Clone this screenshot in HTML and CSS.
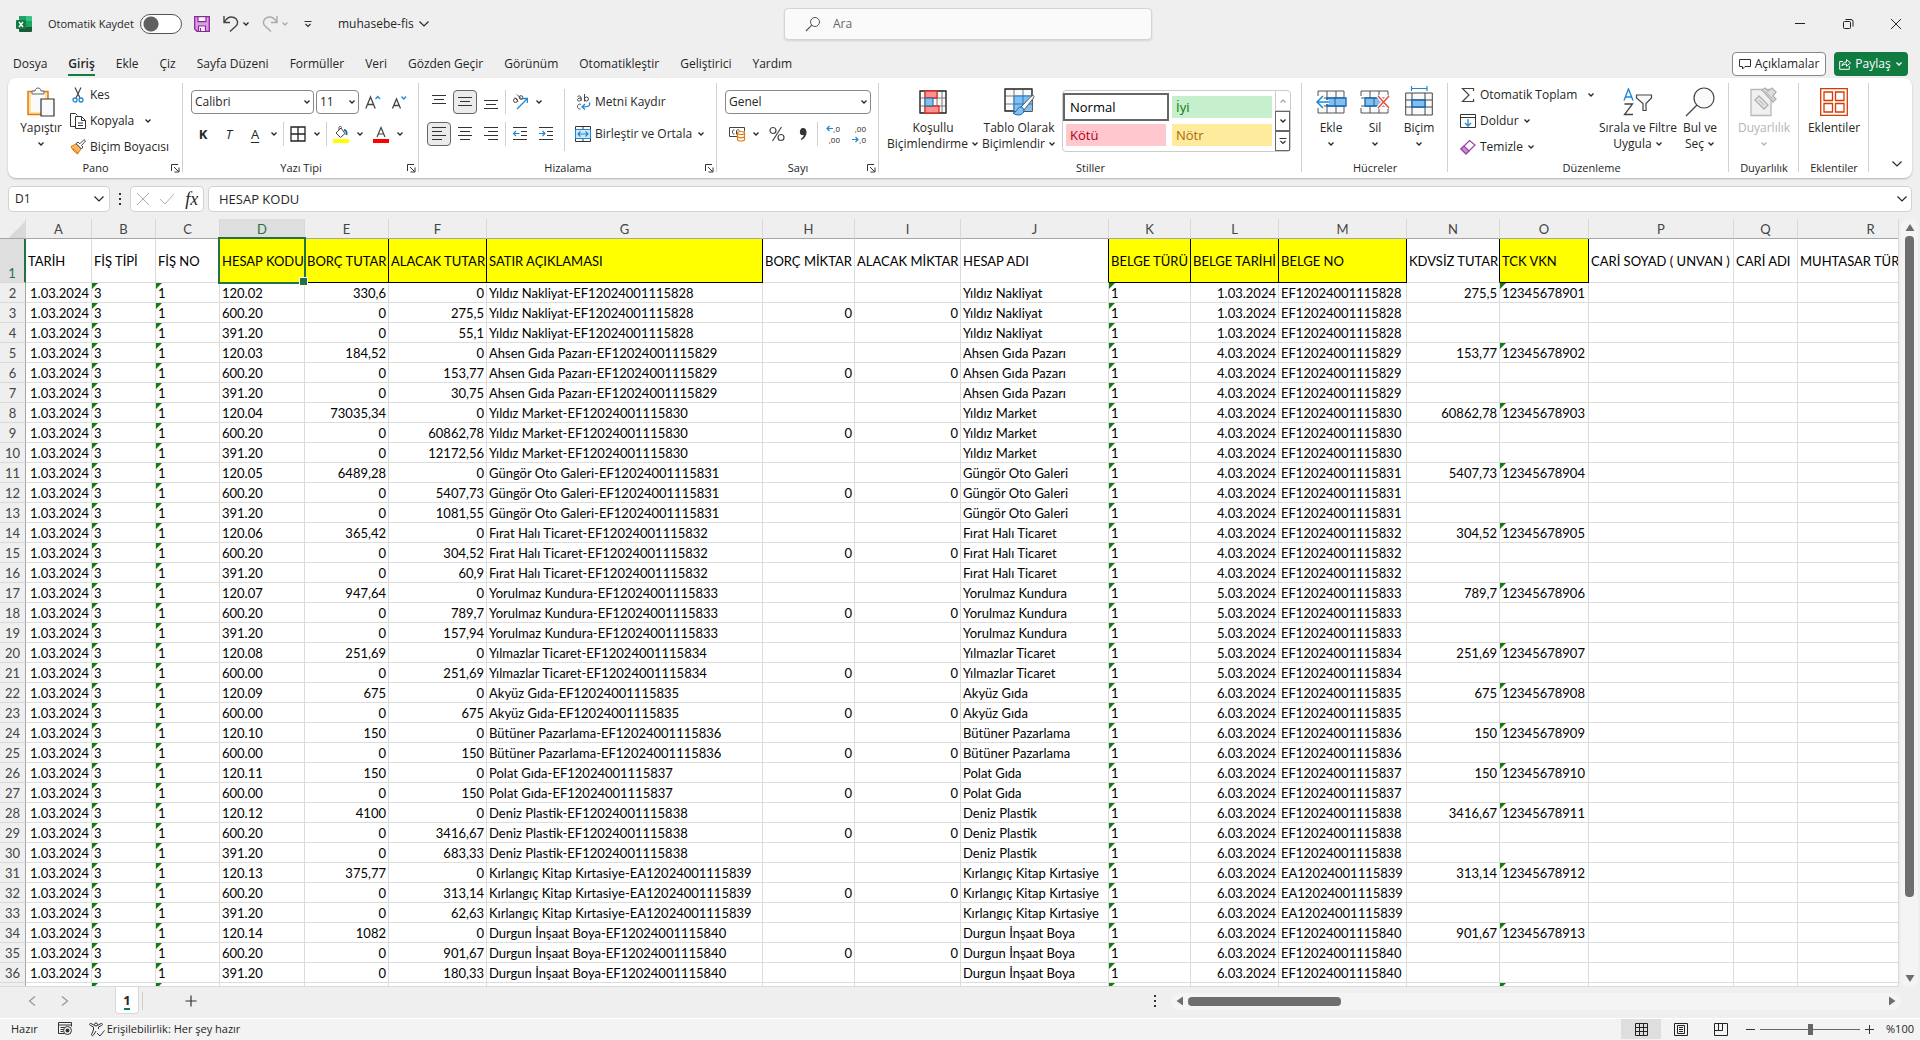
FILE: index.html
```html
<!DOCTYPE html>
<html lang="tr">
<head>
    <meta charset="UTF-8">
    <title>muhasebe-fis</title>
    <link rel="stylesheet" href="styles.css">
</head>
<body>
    <svg class="sprite" aria-hidden="true">
        <symbol id="chev" viewBox="0 0 8 8"><path d="M1.5 2.5 4 5l2.500-2.500" fill="none" stroke="currentColor" stroke-width="1.300"/></symbol>
        <symbol id="chev-lg" viewBox="0 0 12 12"><path d="M1.500 3.500 6 8l4.500-4.500" fill="none" stroke="currentColor" stroke-width="1.200"/></symbol>
        <symbol id="launcher" viewBox="0 0 9 9"><path d="M.5 7V.5H7M3 3l4.500 4.500M8 3.500V8H3.500" fill="none" stroke="#333"/></symbol>
    </svg>

    <header class="titlebar">
        <svg class="app-icon" width="16" height="16" viewBox="0 0 16 16">
            <path d="M3 0h7v8H3z" fill="#21a366"/><path d="M10 0h5a1 1 0 0 1 1 1v4h-6z" fill="#33c481"/>
            <path d="M3 5h7v6H3z" fill="#107c41"/><path d="M10 5h6v6h-6z" fill="#21a366"/>
            <path d="M3 11h13v4a1 1 0 0 1-1 1H4a1 1 0 0 1-1-1z" fill="#185c37"/>
            <rect y="4" width="10" height="9" rx="1" fill="#107c41"/>
            <path d="m3 6 4 5M7 6l-4 5" stroke="#fff" stroke-width="1.400"/>
        </svg>
        <label class="autosave" for="autosave">Otomatik Kaydet</label>
        <input type="checkbox" id="autosave" class="toggle">
        <button class="bar-btn save" aria-label="Kaydet">
            <svg width="16" height="16" viewBox="0 0 16 16"><path d="M.7.7h14.600v14.600H3L.7 13z" fill="#d9a0e0" stroke="#8e24a0" stroke-width="1.300"/><path d="M4 .7h8v5H4zM4.500 15v-5h7v5" fill="#fff" stroke="#8e24a0" stroke-width="1.200"/><path d="M6.500 12v3" stroke="#8e24a0" stroke-width="1.200"/></svg>
        </button>
        <button class="bar-btn undo" aria-label="Geri al">
            <svg width="16" height="18" viewBox="0 0 16 18"><path d="M1 1v6.500h6M1.500 7C4 2.500 8 1.500 11 2.500c4 1.500 4.500 6 2 8.500l-6 5.500" fill="none" stroke="#444" stroke-width="1.400"/></svg>
        </button>
        <button class="bar-btn drop" aria-label="Geri al seçenekleri"><svg class="chev"><use href="#chev"/></svg></button>
        <button class="bar-btn redo" aria-label="Yinele" disabled>
            <svg width="16" height="18" viewBox="0 0 16 18"><path d="M15 1v6.500H9M14.500 7C12 2.500 8 1.500 5 2.500 1 4 .5 8.500 3 11l6 5.500" fill="none" stroke="#aaa" stroke-width="1.400"/></svg>
        </button>
        <button class="bar-btn drop" aria-label="Yinele seçenekleri" disabled><svg class="chev"><use href="#chev"/></svg></button>
        <button class="bar-btn customize" aria-label="Özelleştir">
            <svg width="8" height="8" viewBox="0 0 8 8"><path d="M.5 1.500h7M1.500 4 4 6.500 6.500 4" fill="none" stroke="#333" stroke-width="1.200"/></svg>
        </button>
        <button class="bar-btn filename">muhasebe-fis <svg class="chev-lg"><use href="#chev-lg"/></svg></button>
        <div class="search">
            <svg width="16" height="16" viewBox="0 0 16 16"><circle cx="10" cy="6" r="4.500" fill="none" stroke="#555"/><path d="M6.800 9.200 1 15" stroke="#555" stroke-width="1.200"/></svg>
            <input type="text" placeholder="Ara" aria-label="Ara">
        </div>
        <div class="window-btns">
            <button aria-label="Simge durumuna küçült"><svg width="12" height="12" viewBox="0 0 12 12"><path d="M1 5.500h10" stroke="#222"/></svg></button>
            <button aria-label="Önceki boyut"><svg width="12" height="12" viewBox="0 0 12 12"><rect x="1.500" y="3.500" width="7" height="7" rx="1" fill="none" stroke="#222"/><path d="M3.500 1.500h5.500a2 2 0 0 1 2 2V8.500" fill="none" stroke="#222"/></svg></button>
            <button aria-label="Kapat"><svg width="12" height="12" viewBox="0 0 12 12"><path d="m1 1 10 10M11 1 1 11" stroke="#222"/></svg></button>
        </div>
    </header>

    <nav class="tabs">
        <a href="#">Dosya</a>
        <a href="#" class="active">Giriş</a>
        <a href="#">Ekle</a>
        <a href="#">Çiz</a>
        <a href="#">Sayfa Düzeni</a>
        <a href="#">Formüller</a>
        <a href="#">Veri</a>
        <a href="#">Gözden Geçir</a>
        <a href="#">Görünüm</a>
        <a href="#">Otomatikleştir</a>
        <a href="#">Geliştirici</a>
        <a href="#">Yardım</a>
        <button class="comments-btn">
            <svg width="12" height="12" viewBox="0 0 12 12"><path d="M.5 1.500h11v7H6L3.500 11V8.500h-3z" fill="none" stroke="#333"/></svg>
            Açıklamalar
        </button>
        <button class="share-btn">
            <svg width="12" height="12" viewBox="0 0 12 12"><path d="M4 3.500H.7v7.800h9.600V8M3 8c.5-3 2-4 4.500-4V1.500l4 3.500-4 3.300V6C5.500 6 4 6.500 3 8z" fill="none" stroke="#fff"/></svg>
            Paylaş
            <svg class="chev"><use href="#chev"/></svg>
        </button>
    </nav>

    <section class="ribbon">
        <div class="group clipboard">
            <div class="group-body">
                <button class="big paste">
                    <span class="pic"><svg width="28" height="30" viewBox="0 0 28 30"><path d="M1 4.500h20v23H1z" fill="#ffe2a0" stroke="#e07b10" stroke-width="1.500"/><path d="M4 6h14v19H4z" fill="#fafafa"/><path d="M5 7V4h3c0-4 6-4 6 0h3v3z" fill="#fafafa" stroke="#666"/><path d="M14 12h13v17H14z" fill="#fafafa" stroke="#333" stroke-width="1.200"/></svg></span>
                    Yapıştır
                    <svg class="chev"><use href="#chev"/></svg>
                </button>
                <div class="small-list">
                    <button><span class="ic"><svg width="12" height="16" viewBox="0 0 12 16"><path d="m3 .5 5 10.500M9 .5 4 11" fill="none" stroke="#444" stroke-width="1.200"/><circle cx="3" cy="13" r="2" fill="none" stroke="#1e88d2" stroke-width="1.300"/><circle cx="9" cy="13" r="2" fill="none" stroke="#1e88d2" stroke-width="1.300"/></svg></span>Kes</button>
                    <button><span class="ic"><svg width="16" height="16" viewBox="0 0 16 16"><path d="M5.500 13.500h-5V.5h5l2 2M5.500 3.500h6l4 4v8h-10zM11.500 3.500v4h4M8 10h5M8 12.500h5" fill="none" stroke="#333"/></svg></span>Kopyala <svg class="chev far"><use href="#chev"/></svg></button>
                    <button><span class="ic"><svg width="16" height="16" viewBox="0 0 16 16"><path d="M1 7.500 6 5l5 5-3.500 5C5 13.500 2.500 11 1 7.500z" fill="#fbb968" stroke="#e07b10"/><path d="M3 9.500 8 14" stroke="#e07b10"/><path d="m6 4.500 5.500 5.500 1.500-2-1.500-1.500L15.500 2 14 .6 9.800 4.800 8 3z" fill="#fff" stroke="#444"/></svg></span>Biçim Boyacısı</button>
                </div>
            </div>
            <div class="group-name">Pano<button class="launch" aria-label="Pano ayarları"><svg width="9" height="9"><use href="#launcher"/></svg></button></div>
        </div>

        <div class="group font">
            <div class="group-body rows">
                <div class="row">
                    <span class="combo font-name"><select aria-label="Yazı tipi"><option>Calibri</option></select><svg class="chev"><use href="#chev"/></svg></span>
                    <span class="combo font-size"><select aria-label="Yazı tipi boyutu"><option>11</option></select><svg class="chev"><use href="#chev"/></svg></span>
                    <button class="tool" aria-label="Büyüt"><svg width="16" height="16" viewBox="0 0 16 16"><path d="M.8 14.500 5.500 3l4.700 11.500M2.500 10.500h6" fill="none" stroke="#444" stroke-width="1.300"/><path d="m10.500 5 2.300-2.500L15 5" fill="none" stroke="#1e88d2" stroke-width="1.300"/></svg></button>
                    <button class="tool" aria-label="Küçült"><svg width="16" height="16" viewBox="0 0 16 16"><path d="M1.500 14.500 5.500 5l4 9.500M3 11.500h5" fill="none" stroke="#444" stroke-width="1.300"/><path d="M10.500 2.500 12.800 5 15 2.500" fill="none" stroke="#1e88d2" stroke-width="1.300"/></svg></button>
                </div>
                <div class="row">
                    <button class="tool bold">K</button>
                    <button class="tool italic">T</button>
                    <span class="split"><button class="tool under">A</button><button class="drop" aria-label="Altı çizili"><svg class="chev"><use href="#chev"/></svg></button></span>
                    <i class="sep"></i>
                    <span class="split"><button class="tool" aria-label="Kenarlıklar"><svg width="16" height="16" viewBox="0 0 16 16"><path d="M1 1h14v14H1zM8 1v14M1 8h14" fill="none" stroke="#222" stroke-width="1.300"/></svg></button><button class="drop" aria-label="Kenarlık seç"><svg class="chev"><use href="#chev"/></svg></button></span>
                    <i class="sep"></i>
                    <span class="split"><button class="tool" aria-label="Dolgu rengi"><svg width="16" height="17" viewBox="0 0 16 17"><path d="m3 7 5-5 4 5.500-4.500 4zM6 4V1.500c0-1.500 2.500-1.500 2.500 0" fill="none" stroke="#444"/><path d="M11 4c2 0 3 2 2.500 5" fill="none" stroke="#1565a8" stroke-width="1.800"/><path d="M0 13h16v4H0z" fill="#ff0"/></svg></button><button class="drop" aria-label="Dolgu rengi seç"><svg class="chev"><use href="#chev"/></svg></button></span>
                    <span class="split"><button class="tool" aria-label="Yazı rengi"><svg width="16" height="17" viewBox="0 0 16 17"><path d="M4 11 8 1.500 12 11M5.500 8h5" fill="none" stroke="#444" stroke-width="1.200"/><path d="M0 13h16v4H0z" fill="red"/></svg></button><button class="drop" aria-label="Yazı rengi seç"><svg class="chev"><use href="#chev"/></svg></button></span>
                </div>
            </div>
            <div class="group-name">Yazı Tipi<button class="launch" aria-label="Yazı tipi ayarları"><svg width="9" height="9"><use href="#launcher"/></svg></button></div>
        </div>

        <div class="group align">
            <div class="group-body">
                <div class="rows">
                    <div class="row">
                        <button class="tool" aria-label="Üste hizala"><svg width="14" height="14" viewBox="0 0 14 14"><path d="M0 .5h14M2 4.500h10M0 8.500h14" stroke="#333"/></svg></button>
                        <button class="tool on" aria-label="Ortaya hizala"><svg width="14" height="14" viewBox="0 0 14 14"><path d="M0 2.500h14M2 6.500h10M0 10.500h14" stroke="#333"/></svg></button>
                        <button class="tool" aria-label="Alta hizala"><svg width="14" height="14" viewBox="0 0 14 14"><path d="M0 5.500h14M2 9.500h10M0 13.500h14" stroke="#333"/></svg></button>
                        <i class="sep"></i>
                        <span class="split"><button class="tool" aria-label="Yönlendirme"><svg width="16" height="16" viewBox="0 0 16 16"><circle cx="3.500" cy="6.500" r="2" fill="none" stroke="#444"/><path d="m3 3.500 3 4M5 .5l5 5" stroke="#444"/><circle cx="9" cy="3.500" r="1.800" fill="none" stroke="#444"/><path d="M5 15 15 5M11 4.500h4.500V9" fill="none" stroke="#1e88d2" stroke-width="1.300"/></svg></button><button class="drop" aria-label="Yön seç"><svg class="chev"><use href="#chev"/></svg></button></span>
                    </div>
                    <div class="row">
                        <button class="tool on" aria-label="Sola hizala"><svg width="14" height="14" viewBox="0 0 14 14"><path d="M0 .5h14M0 4.500h10M0 8.500h14M0 12.500h10" stroke="#333"/></svg></button>
                        <button class="tool" aria-label="Ortala"><svg width="14" height="14" viewBox="0 0 14 14"><path d="M0 .5h14M2 4.500h10M0 8.500h14M2 12.500h10" stroke="#333"/></svg></button>
                        <button class="tool" aria-label="Sağa hizala"><svg width="14" height="14" viewBox="0 0 14 14"><path d="M0 .5h14M4 4.500h10M0 8.500h14M4 12.500h10" stroke="#333"/></svg></button>
                        <i class="sep"></i>
                        <button class="tool" aria-label="Girintiyi azalt"><svg width="14" height="14" viewBox="0 0 14 14"><path d="M0 .5h14M8 4.500h6M8 8.500h6M0 12.500h14" stroke="#333"/><path d="M6.500 6.500h-6M3 4 .5 6.500 3 9" fill="none" stroke="#1e88d2" stroke-width="1.200"/></svg></button>
                        <button class="tool" aria-label="Girintiyi artır"><svg width="14" height="14" viewBox="0 0 14 14"><path d="M0 .5h14M8 4.500h6M8 8.500h6M0 12.500h14" stroke="#333"/><path d="M0 6.500h6M3.500 4 6 6.500 3.500 9" fill="none" stroke="#1e88d2" stroke-width="1.200"/></svg></button>
                    </div>
                </div>
                <i class="sep tall"></i>
                <div class="rows">
                    <div class="row">
                        <button class="text-btn"><svg width="16" height="16" viewBox="0 0 16 16"><path d="M2.500 2.500c3-1.500 4 0 3.500 4.500M6 4c-5 0-4 3.500-1.500 3S6 5 6 4M9.500 0v7.500M6 10.500c-4-2-5 5-.5 4.500" fill="none" stroke="#444"/><circle cx="11.500" cy="5" r="2" fill="none" stroke="#444"/><path d="M14.500 8.500c1 4-2 4.500-7 4.500M10 10l-3 3 3 2.500" fill="none" stroke="#1e88d2" stroke-width="1.300"/></svg>Metni Kaydır</button>
                    </div>
                    <div class="row">
                        <button class="text-btn"><svg width="16" height="16" viewBox="0 0 16 16"><path d="M.5.5h15v15H.5zM8 .5v3M8 12.500v3" fill="#fff" stroke="#333"/><path d="M.5 3.500h15v9H.5z" fill="#cfe6f8" stroke="#1e88d2"/><path d="M3 8h10M5.500 5.500 3 8l2.500 2.500M10.500 5.500 13 8l-2.500 2.500" fill="none" stroke="#1e88d2" stroke-width="1.200"/></svg>Birleştir ve Ortala</button>
                        <button class="drop" aria-label="Birleştirme seçenekleri"><svg class="chev"><use href="#chev"/></svg></button>
                    </div>
                </div>
            </div>
            <div class="group-name">Hizalama<button class="launch" aria-label="Hizalama ayarları"><svg width="9" height="9"><use href="#launcher"/></svg></button></div>
        </div>

        <div class="group number">
            <div class="group-body rows">
                <div class="row">
                    <span class="combo number-format"><select aria-label="Sayı biçimi"><option>Genel</option></select><svg class="chev"><use href="#chev"/></svg></span>
                </div>
                <div class="row">
                    <span class="split"><button class="tool" aria-label="Para birimi"><svg width="17" height="16" viewBox="0 0 17 16"><path d="M8 10.500H.5v-9h15v4M5.500 4C3 3 2.500 8.500 5.500 8M7.500 8.500V4.500c1-1 2.500-1 3 0" fill="none" stroke="#444"/><path d="M8.500 7v6.500c0 2 7 2 7 0V7" fill="#fff" stroke="#e07b10" stroke-width="1.200"/><ellipse cx="12" cy="7" rx="3.500" ry="1.500" fill="#fff" stroke="#e07b10" stroke-width="1.200"/><path d="M8.500 10.300c0 2 7 2 7 0" fill="none" stroke="#e07b10" stroke-width="1.200"/></svg></button><button class="drop" aria-label="Para birimi seç"><svg class="chev"><use href="#chev"/></svg></button></span>
                    <button class="tool" aria-label="Yüzde"><svg width="16" height="16" viewBox="0 0 16 16"><circle cx="4" cy="4.500" r="3" fill="none" stroke="#444" stroke-width="1.200"/><circle cx="12" cy="11.500" r="3" fill="none" stroke="#444" stroke-width="1.200"/><path d="M12.500 1 3.500 15" stroke="#444" stroke-width="1.200"/></svg></button>
                    <button class="tool" aria-label="Binlik ayırıcı"><svg width="8" height="14" viewBox="0 0 8 14"><path d="M4 1c5 0 5 9-1.500 12l-.8-1C4 10.500 5 9 4.500 8-.5 9 0 1 4 1z" fill="#333"/></svg></button>
                    <i class="sep"></i>
                    <button class="tool decimals"><span><svg width="7" height="7" viewBox="0 0 7 7"><path d="M7 3.500H1M3.500 1 1 3.500 3.500 6" fill="none" stroke="#1e88d2" stroke-width="1.200"/></svg>,0</span><span>,00</span></button>
                    <button class="tool decimals"><span>,00</span><span><svg width="7" height="7" viewBox="0 0 7 7"><path d="M0 3.500h6M3.500 1 6 3.500 3.500 6" fill="none" stroke="#1e88d2" stroke-width="1.200"/></svg>,0</span></button>
                </div>
            </div>
            <div class="group-name">Sayı<button class="launch" aria-label="Sayı ayarları"><svg width="9" height="9"><use href="#launcher"/></svg></button></div>
        </div>

        <div class="group styles">
            <div class="group-body">
                <button class="big cond">
                    <span class="pic"><svg width="28" height="24" viewBox="0 0 28 24"><path d="M1 1h26v22H1zM1 8h26M1 16h26M6 1v22M18 1v22M23 1v22" fill="#fafafa" stroke="#777"/><path d="M1 1h26v22H1z" fill="none" stroke="#333" stroke-width="1.300"/><path d="M6 1h12v7H6zM6 16h14v7H6z" fill="#ff9090" stroke="#d93025" stroke-width="1.300"/><path d="M6 8h8v8H6z" fill="#83beec" stroke="#1565b0"/></svg></span>
                    Koşullu<br>Biçimlendirme <svg class="chev"><use href="#chev"/></svg>
                </button>
                <button class="big format-table">
                    <span class="pic"><svg width="31" height="28" viewBox="0 0 31 28"><path d="M1 1h27v22H1zM1 8h27M1 16h27M10 1v22M19 1v22" fill="#fafafa" stroke="#777"/><path d="M1 1h27v22H1z" fill="none" stroke="#333" stroke-width="1.300"/><path d="M10 8h18v15H10z" fill="#83beec"/><path d="M10 16h18M19 8v15M10 8v15M10 8h18" stroke="#1e78c8"/><path d="M17 19 27 8.500c3-2 3.500-.5 2.500 1.500L20 22z" fill="#fafafa" stroke="#555"/><path d="M18 19c-5-1-4 5-9 6 3 3 11 3 11-3z" fill="#83beec" stroke="#1565b0"/></svg></span>
                    Tablo Olarak<br>Biçimlendir <svg class="chev"><use href="#chev"/></svg>
                </button>
                <div class="gallery">
                    <div class="swatches">
                        <button class="sw-normal">Normal</button>
                        <button class="sw-good">İyi</button>
                        <button class="sw-bad">Kötü</button>
                        <button class="sw-neutral">Nötr</button>
                    </div>
                    <div class="gallery-nav">
                        <button disabled aria-label="Yukarı"><svg class="chev up"><use href="#chev"/></svg></button>
                        <button aria-label="Aşağı"><svg class="chev"><use href="#chev"/></svg></button>
                        <button aria-label="Diğer"><svg width="8" height="8" viewBox="0 0 8 8"><path d="M.5 1.500h7M1.500 4 4 6.500 6.500 4" fill="none" stroke="#333" stroke-width="1.200"/></svg></button>
                    </div>
                </div>
            </div>
            <div class="group-name">Stiller</div>
        </div>

        <div class="group cells">
            <div class="group-body">
                <button class="big">
                    <span class="pic"><svg width="32" height="24" viewBox="0 0 32 24"><path d="M3 1h26v22H3zM3 8h26M3 16h26M12 1v22M21 1v22" fill="#fafafa" stroke="#555"/><path d="M12 8h19v8H12z" fill="#83beec" stroke="#1565b0" stroke-width="1.300"/><path d="M20 8v8" stroke="#1565b0"/><path d="M0 6h8v12H0z" fill="#fff"/><path d="M14 12H2M8 6l-6 6 6 6" fill="none" stroke="#fff" stroke-width="4"/><path d="M14 12H2M8 6l-6 6 6 6" fill="none" stroke="#1e88d2" stroke-width="1.500"/></svg></span>
                    Ekle
                    <svg class="chev"><use href="#chev"/></svg>
                </button>
                <button class="big">
                    <span class="pic"><svg width="30" height="24" viewBox="0 0 30 24"><path d="M1 6V1h27v5M1 8h27M1 18v5h27v-5M1 16h27M10 1v22M19 1v22" fill="#fafafa" stroke="#555"/><path d="M5 8h15l3 4-3 4H5z" fill="#83beec" stroke="#1565b0" stroke-width="1.300"/><path d="M14 8v8" stroke="#1565b0"/><path d="m18 6 11 12M29 6 18 18" stroke="#fff" stroke-width="4"/><path d="m18 6 11 12M29 6 18 18" stroke="#e8453c" stroke-width="1.400"/></svg></span>
                    Sil
                    <svg class="chev"><use href="#chev"/></svg>
                </button>
                <button class="big">
                    <span class="pic"><svg width="28" height="32" viewBox="0 0 28 32"><path d="M7 2.500h15M6.500 0v5M22 0v5" stroke="#1e88d2" stroke-width="1.200"/><path d="M.7 7h26.600v22H.7zM.7 14h26.600M.7 21h26.600M7 7v22M20 7v22" fill="#fafafa" stroke="#444"/><path d="M7 14h13v7H7z" fill="#83beec" stroke="#1565b0" stroke-width="1.300"/></svg></span>
                    Biçim
                    <svg class="chev"><use href="#chev"/></svg>
                </button>
            </div>
            <div class="group-name">Hücreler</div>
        </div>

        <div class="group editing">
            <div class="group-body">
                <div class="small-list">
                    <button><span class="ic"><svg width="14" height="16" viewBox="0 0 14 16"><path d="M12.500 4V1.500h-11L8 8l-6.500 6.500h11V12" fill="none" stroke="#444" stroke-width="1.200"/></svg></span>Otomatik Toplam <svg class="chev far"><use href="#chev"/></svg></button>
                    <button><span class="ic"><svg width="16" height="14" viewBox="0 0 16 14"><path d="M.5.5h15v13H.5zM.5 3.500h15" fill="none" stroke="#333"/><path d="M8 5v7M5 9l3 3 3-3" fill="none" stroke="#1e88d2" stroke-width="1.300"/></svg></span>Doldur <svg class="chev"><use href="#chev"/></svg></button>
                    <button><span class="ic"><svg width="16" height="16" viewBox="0 0 16 16"><path d="M1 10 9.500 1.500 15 6l-9 9z" fill="#fff" stroke="#9b3fa8" stroke-width="1.200"/><path d="M1 10l3-3 5 5-3 3z" fill="#d08bd8" stroke="#9b3fa8" stroke-width="1.200"/></svg></span>Temizle <svg class="chev"><use href="#chev"/></svg></button>
                </div>
                <button class="big sort">
                    <span class="pic"><svg width="30" height="28" viewBox="0 0 30 28"><path d="M1 12.500 5.500 1 10 12.500M2.500 9h6" fill="none" stroke="#1e88d2" stroke-width="1.400"/><path d="M1.500 16h8l-8 10.500h8.500" fill="none" stroke="#444" stroke-width="1.300"/><path d="M13.500 7h15v3l-5.500 5.500v7h-3v-7L13.500 10z" fill="#fafafa" stroke="#444" stroke-width="1.200"/></svg></span>
                    Sırala ve Filtre<br>Uygula <svg class="chev"><use href="#chev"/></svg>
                </button>
                <button class="big find">
                    <span class="pic"><svg width="30" height="30" viewBox="0 0 30 30"><circle cx="19" cy="11" r="10" fill="#fafafa" stroke="#444" stroke-width="1.200"/><path d="M12 18 1 29" stroke="#444" stroke-width="1.300"/></svg></span>
                    Bul ve<br>Seç <svg class="chev"><use href="#chev"/></svg>
                </button>
            </div>
            <div class="group-name">Düzenleme</div>
        </div>

        <div class="group sensitivity">
            <div class="group-body">
                <button class="big" disabled>
                    <span class="pic"><svg width="28" height="30" viewBox="0 0 28 30"><path d="M1 2.500h20v26H1z" fill="#f0f0f0" stroke="#b8b8b8" stroke-width="1.300"/><path d="m5 13 4-4 9 9-4 4z" fill="#e4e4e4" stroke="#b0b0b0" stroke-width="1.300"/><path d="m9 13 5 5" stroke="#b0b0b0"/><path d="m12 3 3-2 3 3 4-3 4 4-3 4 3 3-3 3z" fill="#ddd" stroke="#b0b0b0" stroke-width="1.300"/><path d="m15 4 8 8" stroke="#b0b0b0"/></svg></span>
                    Duyarlılık
                    <svg class="chev"><use href="#chev"/></svg>
                </button>
            </div>
            <div class="group-name">Duyarlılık</div>
        </div>

        <div class="group addins">
            <div class="group-body">
                <button class="big">
                    <span class="pic"><svg width="28" height="28" viewBox="0 0 28 28"><path d="M.7.7h26.600v26.600H.7zM4 4h8.500v8.500H4zM15.500 4H24v8.500h-8.500zM4 15.500h8.500V24H4zM15.500 15.500H24V24h-8.500z" fill="none" stroke="#d83b01" stroke-width="1.300"/></svg></span>
                    Eklentiler
                </button>
            </div>
            <div class="group-name">Eklentiler</div>
        </div>
        <button class="collapse" aria-label="Şeridi daralt"><svg class="chev-lg"><use href="#chev-lg"/></svg></button>
    </section>

    <section class="formula-bar">
        <div class="name-box"><input type="text" value="D1" aria-label="Ad kutusu"><svg class="chev-lg"><use href="#chev-lg"/></svg></div>
        <svg class="dots" width="3" height="12" viewBox="0 0 3 12"><path d="M0 0h2v2H0zM0 5h2v2H0zM0 10h2v2H0z" fill="#333"/></svg>
        <div class="fx-box">
            <button aria-label="İptal" disabled><svg width="14" height="14" viewBox="0 0 14 14"><path d="m1 1 12 12M13 1 1 13" stroke="#b0b0b0"/></svg></button>
            <button aria-label="Gir" disabled><svg width="16" height="12" viewBox="0 0 16 12"><path d="m1 6 5 5L15 1" fill="none" stroke="#b0b0b0"/></svg></button>
            <button class="fx">fx</button>
        </div>
        <div class="formula"><input type="text" value="HESAP KODU" aria-label="Formül çubuğu"><svg class="chev-lg"><use href="#chev-lg"/></svg></div>
    </section>

    <main class="workspace">
        <div class="viewport">
            <table class="sheet">
                <colgroup id="cols"></colgroup>
                <thead id="letters"></thead>
                <tbody id="rows"></tbody>
            </table>
        </div>
        <div class="vscroll">
            <svg width="10" height="8" viewBox="0 0 10 8"><path d="M5 0 9.500 7h-9z" fill="#6e6e6e"/></svg>
            <div class="vtrack"><div class="vthumb"></div></div>
            <svg width="10" height="8" viewBox="0 0 10 8"><path d="M.5 1h9L5 8z" fill="#6e6e6e"/></svg>
        </div>
    </main>

    <footer>
        <div class="sheet-bar">
            <button aria-label="Önceki sayfa"><svg width="8" height="12" viewBox="0 0 8 12"><path d="M7 1.500 1.500 6 7 10.500" fill="none" stroke="#999" stroke-width="1.300"/></svg></button>
            <button aria-label="Sonraki sayfa"><svg width="8" height="12" viewBox="0 0 8 12"><path d="M1 1.500 6.500 6 1 10.500" fill="none" stroke="#999" stroke-width="1.300"/></svg></button>
            <button class="sheet-tab">1</button>
            <i class="sep"></i>
            <button class="add-sheet" aria-label="Yeni sayfa"><svg width="12" height="12" viewBox="0 0 12 12"><path d="M6 .5v11M.5 6h11" stroke="#333" stroke-width="1.200"/></svg></button>
            <svg class="dots" width="3" height="12" viewBox="0 0 3 12"><path d="M0 0h2v2H0zM0 5h2v2H0zM0 10h2v2H0z" fill="#333"/></svg>
            <div class="hscroll">
                <svg width="8" height="10" viewBox="0 0 8 10"><path d="M7 .5v9L.5 5z" fill="#6e6e6e"/></svg>
                <div class="htrack"><div class="hthumb"></div></div>
                <svg width="8" height="10" viewBox="0 0 8 10"><path d="M1 .5v9L7.500 5z" fill="#6e6e6e"/></svg>
            </div>
        </div>
        <div class="status-bar">
            <span>Hazır</span>
            <button class="macro" aria-label="Makro kaydet"><svg width="15" height="14" viewBox="0 0 15 14"><path d="M6 11.500H.5V.5h13v4M.5 3h13M2.500 5.500h4M2.500 7.500h3M2.500 9.500h2.500" fill="none" stroke="#333"/><circle cx="9.500" cy="8.500" r="4" fill="none" stroke="#333"/><circle cx="9.500" cy="8.500" r="2" fill="#333"/></svg></button>
            <button class="access"><svg width="16" height="15" viewBox="0 0 16 15"><circle cx="7" cy="2.500" r="1.500" fill="none" stroke="#333"/><path d="M5.500 3.500 2 1.500C.5 1 0 3 1.500 3.500l3 1.500v3l-2 4.500c0 1.500 1.500 1.500 2 .5L7 9M8.500 3.500 12 1.500c1.500-.5 2 1.500.5 2l-3 1.500v2M8 11l3 3 4.500-5.500" fill="none" stroke="#333"/></svg>Erişilebilirlik: Her şey hazır</button>
            <div class="views">
                <button class="on" aria-label="Normal"><svg width="13" height="13" viewBox="0 0 13 13"><path d="M.5.5h12v12H.5zM.5 4.500h12M.5 8.500h12M4.500.5v12M8.500.5v12" fill="none" stroke="#222"/></svg></button>
                <button aria-label="Sayfa düzeni"><svg width="14" height="13" viewBox="0 0 14 13"><path d="M.5.5h13v12H.5zM3.500 2.500h7v8h-7zM5 4.500h4M5 6.500h4M5 8.500h4" fill="none" stroke="#222"/></svg></button>
                <button aria-label="Sayfa sonu önizleme"><svg width="14" height="13" viewBox="0 0 14 13"><path d="M.5.5h13v12H.5zM.5 7.500h8v-7M4.500.5v7" fill="none" stroke="#222"/></svg></button>
            </div>
            <button class="zoom-btn" aria-label="Uzaklaştır"><svg width="9" height="9" viewBox="0 0 9 9"><path d="M0 4.500h9" stroke="#333"/></svg></button>
            <input type="range" class="zoom" min="0" max="200" value="100" aria-label="Yakınlaştırma">
            <button class="zoom-btn" aria-label="Yakınlaştır"><svg width="9" height="9" viewBox="0 0 9 9"><path d="M0 4.500h9M4.500 0v9" stroke="#333"/></svg></button>
            <span class="percent">%100</span>
        </div>
    </footer>

    <script>
        // name, width, header text
        const columns = [
            ["A", 66, "TARİH"], ["B", 64, "FİŞ TİPİ"], ["C", 64, "FİŞ NO"],
            ["D", 85, "HESAP KODU"], ["E", 84, "BORÇ TUTAR"], ["F", 98, "ALACAK TUTAR"],
            ["G", 276, "SATIR AÇIKLAMASI"], ["H", 92, "BORÇ MİKTAR"], ["I", 106, "ALACAK MİKTAR"],
            ["J", 148, "HESAP ADI"], ["K", 82, "BELGE TÜRÜ"], ["L", 88, "BELGE TARİHİ"],
            ["M", 128, "BELGE NO"], ["N", 93, "KDVSİZ TUTAR"], ["O", 89, "TCK VKN"],
            ["P", 145, "CARİ SOYAD ( UNVAN )"], ["Q", 64, "CARİ ADI"], ["R", 146, "MUHTASAR TÜR"]
        ];
        const required = "DEFGKLMO";
        const rightAligned = "AEFHILN";

        const invoices = [
            { name: "Yıldız Nakliyat", no: "EF12024001115828", date: "1.03.2024", code: "120.02", total: "330,6", lines: [["600.20", "275,5"], ["391.20", "55,1"]] },
            { name: "Ahsen Gıda Pazarı", no: "EF12024001115829", date: "4.03.2024", code: "120.03", total: "184,52", lines: [["600.20", "153,77"], ["391.20", "30,75"]] },
            { name: "Yıldız Market", no: "EF12024001115830", date: "4.03.2024", code: "120.04", total: "73035,34", lines: [["600.20", "60862,78"], ["391.20", "12172,56"]] },
            { name: "Güngör Oto Galeri", no: "EF12024001115831", date: "4.03.2024", code: "120.05", total: "6489,28", lines: [["600.20", "5407,73"], ["391.20", "1081,55"]] },
            { name: "Fırat Halı Ticaret", no: "EF12024001115832", date: "4.03.2024", code: "120.06", total: "365,42", lines: [["600.20", "304,52"], ["391.20", "60,9"]] },
            { name: "Yorulmaz Kundura", no: "EF12024001115833", date: "5.03.2024", code: "120.07", total: "947,64", lines: [["600.20", "789,7"], ["391.20", "157,94"]] },
            { name: "Yılmazlar Ticaret", no: "EF12024001115834", date: "5.03.2024", code: "120.08", total: "251,69", lines: [["600.00", "251,69"]] },
            { name: "Akyüz Gıda", no: "EF12024001115835", date: "6.03.2024", code: "120.09", total: "675", lines: [["600.00", "675"]] },
            { name: "Bütüner Pazarlama", no: "EF12024001115836", date: "6.03.2024", code: "120.10", total: "150", lines: [["600.00", "150"]] },
            { name: "Polat Gıda", no: "EF12024001115837", date: "6.03.2024", code: "120.11", total: "150", lines: [["600.00", "150"]] },
            { name: "Deniz Plastik", no: "EF12024001115838", date: "6.03.2024", code: "120.12", total: "4100", lines: [["600.20", "3416,67"], ["391.20", "683,33"]] },
            { name: "Kırlangıç Kitap Kırtasiye", no: "EA12024001115839", date: "6.03.2024", code: "120.13", total: "375,77", lines: [["600.20", "313,14"], ["391.20", "62,63"]] },
            { name: "Durgun İnşaat Boya", no: "EF12024001115840", date: "6.03.2024", code: "120.14", total: "1082", lines: [["600.20", "901,67"], ["391.20", "180,33"]] }
        ];

        let rowNo = 1;

        function addRow(values, className) {
            const row = document.getElementById("rows").insertRow();
            row.className = className;
            const head = document.createElement("th");
            head.textContent = values.D ? rowNo++ : "";
            row.appendChild(head);
            columns.forEach(([letter]) => {
                const cell = row.insertCell();
                const value = values[letter];
                cell.textContent = value || "";
                if (className === "title-row") {
                    if (required.includes(letter)) cell.classList.add("required");
                    if ("JN".includes(letter)) cell.classList.add("edge");
                    if (letter === "D") cell.classList.add("selected");
                    return;
                }
                if (rightAligned.includes(letter)) cell.classList.add("num");
                // numbers stored as text get the green corner
                if ("BCKO".includes(letter) && value !== undefined) cell.classList.add("as-text");
            });
        }

        function renderSheet() {
            const cols = document.getElementById("cols");
            const letters = document.getElementById("letters").insertRow();
            cols.innerHTML = '<col class="head-col">';
            letters.innerHTML = '<th class="corner"></th>';
            columns.forEach(([letter, width]) => {
                cols.innerHTML += `<col style="width:${width}px">`;
                letters.innerHTML += `<th class="${letter === "D" ? "current" : ""}">${letter}</th>`;
            });

            addRow(Object.fromEntries(columns.map(c => [c[0], c[2]])), "title-row");

            invoices.forEach((inv, i) => {
                const base = {
                    A: "1.03.2024", B: "3", C: "1", G: inv.name + "-" + inv.no,
                    J: inv.name, K: "1", L: inv.date, M: inv.no
                };
                addRow({ ...base, D: inv.code, E: inv.total, F: "0", N: inv.lines[0][1], O: String(12345678901 + i) }, "");
                inv.lines.forEach(([code, amount], n) => {
                    const qty = n === 0 ? { H: "0", I: "0" } : {};
                    addRow({ ...base, ...qty, D: code, E: "0", F: amount }, "");
                });
            });
            addRow({ B: "", C: "", K: "", O: "" }, "");
        }

        renderSheet();
    </script>
</body>
</html>
```
FILE: styles.css
```css
* {
    box-sizing: border-box;
}

html {
    height: 100%;
    overflow: hidden;
}

body {
    margin: 0;
    height: 100%;
    display: flex;
    flex-direction: column;
    overflow: hidden;
    background: #efefef;
    color: #262626;
    font-family: "Open Sans", "Noto Sans", sans-serif;
    font-size: 12px;
    line-height: 16px;
}

button, input, select {
    font: inherit;
    color: inherit;
    margin: 0;
    padding: 0;
    border: none;
    background: none;
    outline: none;
}

button {
    display: flex;
    align-items: center;
    justify-content: center;
    white-space: nowrap;
}

svg {
    flex: none;
}

.sprite {
    position: absolute;
    width: 0;
    height: 0;
}

.chev {
    width: 8px;
    height: 8px;
}

.chev-lg {
    width: 12px;
    height: 12px;
}

/* title bar */
.titlebar {
    position: relative;
    display: flex;
    align-items: center;
    height: 48px;
    padding-left: 16px;
    flex: none;
}

.autosave {
    width: 92px;
    margin-left: 16px;
    white-space: nowrap;
    font-size: 11px;
}

.toggle {
    appearance: none;
    width: 42px;
    height: 20px;
    margin-right: 12px;
    border: 1px solid #555;
    border-radius: 10px;
    background: radial-gradient(circle at 10px 9px, #606060 7px, #fff 8px);
}

.bar-btn.undo {
    margin-left: 13px;
}

.bar-btn.redo {
    margin-left: 9px;
}

.drop {
    width: 14px;
    height: 24px;
}

.bar-btn:disabled {
    color: #aaa;
}

.customize {
    margin-left: 12px;
}

.filename {
    margin-left: 26px;
    gap: 4px;
}

.search {
    position: absolute;
    left: 50%;
    top: 8px;
    width: 368px;
    height: 32px;
    margin-left: -176px;
    display: flex;
    align-items: center;
    gap: 12px;
    padding-left: 20px;
    border: 1px solid #d4d4d4;
    border-radius: 4px;
    background: #fafafa;
    box-shadow: 0 1px 2px rgba(0, 0, 0, 0.12);
}

.search input {
    flex: 1;
}

.search input::placeholder {
    color: #666;
}

.window-btns {
    display: flex;
    margin-left: auto;
}

.window-btns button {
    width: 48px;
    height: 32px;
}

/* ribbon tabs */
.tabs {
    display: flex;
    align-items: center;
    gap: 21px;
    height: 30px;
    padding: 1px 12px 0 13px;
    flex: none;
}

.tabs a {
    color: #262626;
    text-decoration: none;
    white-space: nowrap;
    line-height: 20px;
    border-bottom: 2px solid transparent;
    border-top: 2px solid transparent;
}

.tabs .active {
    font-weight: 600;
    border-bottom-color: #107c41;
}

.comments-btn {
    width: 94px;
    height: 24px;
    margin-left: auto;
    gap: 4px;
    border: 1px solid #888;
    border-radius: 4px;
    background: #fff;
}

.share-btn {
    width: 74px;
    height: 24px;
    margin-left: -13px;
    gap: 4px;
    border-radius: 4px;
    background: #107c41;
    color: #fff;
}

/* ribbon */
.ribbon {
    display: flex;
    height: 100px;
    margin: 0 8px;
    border-radius: 8px;
    background: #fff;
    box-shadow: 0 1px 2px rgba(0, 0, 0, 0.25);
    flex: none;
}

.group {
    position: relative;
    display: flex;
    flex-direction: column;
    padding: 0 8px;
}

.group::after {
    content: "";
    position: absolute;
    right: 0;
    top: 5px;
    bottom: 6px;
    width: 1px;
    background: #d0d0d0;
}

.group-body {
    display: flex;
    align-items: flex-start;
    height: 82px;
}

.group-name {
    text-align: center;
    font-size: 11px;
}

.launch {
    position: absolute;
    right: 3px;
    bottom: 5px;
}

.rows {
    display: flex;
    flex-direction: column;
    gap: 8px;
    padding-top: 12px;
}

.row {
    display: flex;
    align-items: center;
    gap: 2px;
    height: 24px;
}

.split {
    display: flex;
}

.tool {
    width: 24px;
    height: 24px;
}

.tool.on {
    border: 1px solid #666;
    border-radius: 4px;
    background: #ebebeb;
}

.sep {
    width: 1px;
    height: 24px;
    background: #d0d0d0;
}

.sep.tall {
    height: 62px;
    margin: 11px 10px 0 6px;
}

.combo {
    position: relative;
    height: 24px;
}

.combo select {
    appearance: none;
    width: 100%;
    height: 24px;
    padding-left: 3px;
    border: 1px solid #888;
    border-radius: 4px;
    background: #fff;
}

.combo .chev {
    position: absolute;
    right: 3px;
    top: 8px;
}

.big {
    display: block;
    padding-top: 6px;
    text-align: center;
    flex: none;
}

.big .pic {
    display: flex;
    align-items: center;
    justify-content: center;
    height: 36px;
}

.paste > .chev, .cells .chev, .sensitivity .chev {
    display: block;
    margin: 4px auto 0;
}

.big:disabled {
    color: #b4b4b4;
}

.small-list {
    padding-top: 4px;
}

.small-list button {
    height: 26px;
    gap: 4px;
}

.small-list .ic {
    display: flex;
    justify-content: center;
    width: 16px;
}

.small-list .far {
    margin-left: 6px;
}

.text-btn {
    gap: 4px;
}

.clipboard {
    width: 175px;
    padding: 0 6px;
}

.paste {
    width: 54px;
    margin-right: 2px;
}

.font {
    width: 236px;
}

.font-name {
    width: 123px;
}

.font-size {
    width: 43px;
}

.bold {
    font-size: 13px;
    font-weight: bold;
}

.italic {
    font-size: 13px;
    font-style: italic;
}

.under {
    font-size: 13px;
    text-decoration: underline;
    text-underline-offset: 3px;
}

.align {
    width: 298px;
}

.number {
    width: 162px;
}

.number-format {
    width: 146px;
}

.decimals {
    flex-direction: column;
    align-items: flex-end;
    padding-right: 4px;
    font-size: 8px;
    line-height: 11px;
}

.decimals span {
    display: flex;
    align-items: center;
}

.styles {
    width: 423px;
}

.cond {
    width: 92px;
    margin-right: 2px;
}

.format-table {
    width: 76px;
    margin-right: 5px;
}

.gallery {
    display: flex;
    width: 229px;
    height: 62px;
    margin-top: 12px;
    border: 1px solid #ccc;
    border-radius: 4px;
}

.swatches {
    display: grid;
    grid-template-columns: 100px 100px;
    grid-auto-rows: 22px;
    gap: 6px;
    flex: 1;
    padding: 5px 3px;
}

.swatches button {
    justify-content: flex-start;
    padding-left: 4px;
    font-size: 13px;
}

.sw-normal {
    color: #000;
    outline: 2px solid #666;
    outline-offset: 1px;
}

.sw-good {
    background: #c6efce;
    color: #0a7a0a;
}

.sw-bad {
    background: #ffc7ce;
    color: #b00010;
}

.sw-neutral {
    background: #ffeb9c;
    color: #a86a10;
}

.gallery-nav {
    width: 15px;
}

.gallery-nav button {
    width: 15px;
    height: 20px;
    border: 1px solid #666;
}

.gallery-nav button:disabled {
    border-color: #ccc;
    border-top: none;
    border-right: none;
    color: #aaa;
}

.up {
    transform: rotate(180deg);
}

.cells {
    width: 146px;
    padding: 0 7px;
}

.cells .big {
    width: 44px;
}

.editing {
    width: 281px;
    padding: 0 6px 0 12px;
}

.sort {
    width: 78px;
    margin-left: auto;
}

.find {
    width: 46px;
}

.sensitivity, .addins {
    width: 70px;
    padding: 0;
    align-items: center;
}

.collapse {
    align-self: flex-end;
    margin: 0 9px 8px auto;
}

/* formula bar */
.formula-bar {
    display: flex;
    align-items: center;
    height: 26px;
    margin: 8px 8px 7px;
    flex: none;
}

.name-box, .fx-box, .formula {
    display: flex;
    align-items: center;
    height: 26px;
    border: 1px solid #d2d2d2;
    border-radius: 4px;
    background: #fff;
}

.name-box {
    width: 102px;
    padding: 0 4px 0 6px;
}

.name-box input {
    flex: 1;
    width: 60px;
}

.formula-bar .dots {
    margin: 0 8px 0 9px;
}

.fx-box {
    width: 74px;
    justify-content: space-around;
    margin-right: 4px;
}

.fx {
    font-family: "Liberation Serif", serif;
    font-style: italic;
    font-size: 18px;
}

.formula {
    flex: 1;
    padding: 0 3px 0 10px;
}

.formula input {
    flex: 1;
    font-size: 13px;
}

/* sheet */
.workspace {
    display: flex;
    flex: 1;
    min-height: 0;
}

.viewport {
    flex: 1;
    overflow: hidden;
    border-right: 1px solid #d9d9d9;
    border-bottom: 1px solid #d9d9d9;
}

.sheet {
    width: 1944px;
    table-layout: fixed;
    border-collapse: separate;
    border-spacing: 0;
    background: #fff;
    color: #000;
    font-family: Lato, "Open Sans", sans-serif;
    font-size: 13px;
    line-height: 18px;
}

.head-col {
    width: 26px;
}

.sheet th {
    padding: 0;
    font-weight: normal;
    font-size: 13px;
    color: #444;
    background: #efefef;
    border-right: 1px solid #d9d9d9;
}

.sheet thead th {
    height: 20px;
    border-bottom: 1px solid #a6a6a6;
}

.sheet thead .current {
    background: #dedede;
    color: #217346;
}

.sheet thead .corner {
    background: linear-gradient(135deg, #efefef 62%, #d9d9d9 62%);
}

.sheet tbody th {
    border-right: 1px solid #a6a6a6;
    border-bottom: 1px solid #d9d9d9;
}

.sheet td {
    position: relative;
    height: 20px;
    padding: 0 2px;
    border-right: 1px solid #dcdcdc;
    border-bottom: 1px solid #dcdcdc;
    white-space: nowrap;
}

.sheet .num {
    text-align: right;
}

.sheet .title-row td {
    height: 44px;
}

.sheet .title-row th {
    vertical-align: bottom;
    background: #dedede;
    color: #217346;
    border-right: 2px solid #217346;
}

.sheet .title-row .required {
    background: #ff0;
    border-color: #000;
}

.sheet .title-row .edge {
    border-right-color: #000;
}

.selected::before {
    content: "";
    position: absolute;
    inset: -2px;
    border: 2px solid #217346;
    z-index: 1;
}

.selected::after {
    content: "";
    position: absolute;
    right: -4px;
    bottom: -4px;
    width: 7px;
    height: 7px;
    border: 1px solid #fff;
    background: #217346;
    z-index: 2;
}

.as-text::before {
    content: "";
    position: absolute;
    left: 0;
    top: 0;
    border-top: 6px solid #107c10;
    border-right: 6px solid transparent;
}

.vscroll {
    width: 17px;
    margin: 0 2px;
    padding: 5px 0;
    display: flex;
    flex-direction: column;
    align-items: center;
    gap: 4px;
    border-radius: 8px;
    background: #f4f4f4;
}

.vtrack {
    flex: 1;
}

.vthumb {
    width: 9px;
    height: 90%;
    border-radius: 4px;
    background: #6e6e6e;
}

/* footer */
footer {
    flex: none;
}

.sheet-bar {
    display: flex;
    align-items: center;
    height: 31px;
    padding: 0 0 3px 15px;
}

.sheet-bar button {
    width: 33px;
    height: 24px;
}

.sheet-bar .sheet-tab {
    position: relative;
    align-self: flex-start;
    width: 24px;
    height: 27px;
    margin: 0 3px 0 34px;
    border: 1px solid #d9d9d9;
    border-top: none;
    border-radius: 0 0 4px 4px;
    background: #fff;
    font-size: 13px;
    font-weight: bold;
}

.sheet-tab::after {
    content: "";
    position: absolute;
    left: 8px;
    bottom: 3px;
    width: 6px;
    height: 2px;
    background: #107c41;
}

.sheet-bar .sep {
    height: 18px;
}

.sheet-bar .add-sheet {
    margin-left: 31px;
}

.sheet-bar .dots {
    margin: 0 14px 0 auto;
}

.hscroll {
    display: flex;
    align-items: center;
    gap: 4px;
    width: 730px;
    height: 17px;
    margin-right: 19px;
    padding: 0 5px;
    border-radius: 8px;
    background: #f4f4f4;
}

.htrack {
    flex: 1;
}

.hthumb {
    width: 22%;
    height: 9px;
    border-radius: 4px;
    background: #6e6e6e;
}

.status-bar {
    display: flex;
    align-items: center;
    height: 22px;
    padding: 0 6px 1px 11px;
    border-top: 1px solid #fff;
    background: #f3f3f3;
    font-size: 11px;
}

.macro {
    margin: 0 16px 0 20px;
}

.access {
    gap: 2px;
}

.views {
    display: flex;
    margin: 0 5px 0 auto;
}

.views button {
    width: 40px;
    height: 20px;
}

.views .on {
    background: #dedede;
}

.zoom {
    appearance: none;
    width: 100px;
    height: 16px;
    margin: 0 5px;
    background: linear-gradient(#666, #666) center / 100% 1px no-repeat;
}

.zoom::-webkit-slider-thumb {
    appearance: none;
    width: 5px;
    height: 11px;
    background: #666;
}

.percent {
    width: 28px;
    margin-left: 12px;
}
```
